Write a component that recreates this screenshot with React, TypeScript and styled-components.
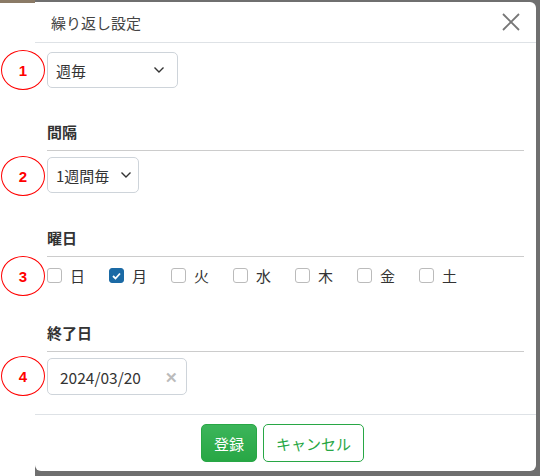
import styled, { createGlobalStyle } from 'styled-components';

const Global = createGlobalStyle`
  body {
    margin: 0;
    font-family: 'Noto Sans CJK JP', 'Noto Sans', sans-serif;
    background: #fff;
  }
`;

const Page = styled.div`
  position: relative;
  width: 540px;
  height: 476px;
  display: flex;
  overflow: hidden;
`;

const Gutter = styled.div`
  width: 35px;
  background: #fff;
  border-top: 3px solid #8a7a66;
  box-sizing: border-box;
`;

const Backdrop = styled.div`
  flex: 1;
  background: #6f6f6f;
  padding: 2px 4px 5px 0;
  display: flex;
`;

const Modal = styled.div`
  flex: 1;
  background: #fff;
  border-radius: 0 6px 6px 6px;
  display: flex;
  flex-direction: column;
`;

const Header = styled.div`
  height: 40px;
  display: flex;
  align-items: center;
  justify-content: space-between;
  padding: 0 16px;
  border-bottom: 1px solid #dee2e6;
  color: #444;
  font-size: 15px;
`;

const Body = styled.div`
  flex: 1;
  padding: 9px 12px 0 12px;
  display: flex;
  flex-direction: column;
`;

const SectionTitle = styled.div<{ $mt: number }>`
  font-size: 15px;
  font-weight: 700;
  color: #333;
  margin-top: ${(p) => p.$mt}px;
  padding-bottom: 8px;
  border-bottom: 1px solid #ccc;
  margin-bottom: 6px;
`;

const Select = styled.div<{ $w: number; $gap: number }>`
  width: ${(p) => p.$w}px;
  height: 36px;
  box-sizing: border-box;
  border: 1px solid #ced4da;
  border-radius: 5px;
  display: flex;
  align-items: center;
  justify-content: space-between;
  padding: 0 ${(p) => p.$gap}px 0 8px;
  font-size: 15px;
  color: #333;
`;

const Days = styled.div`
  display: flex;
  gap: 16px;
  margin-top: 2px;
`;

const Day = styled.label`
  display: flex;
  align-items: center;
  gap: 8px;
  font-size: 15px;
  color: #333;
  width: 46px;
`;

const Box = styled.span<{ $on?: boolean }>`
  width: 15px;
  height: 15px;
  box-sizing: border-box;
  border-radius: 3px;
  border: 1px solid ${(p) => (p.$on ? '#1b6aa5' : '#bbb')};
  background: ${(p) => (p.$on ? '#1b6aa5' : '#fff')};
  display: flex;
  align-items: center;
  justify-content: center;
`;

const DateInput = styled.div`
  width: 140px;
  height: 37px;
  box-sizing: border-box;
  border: 1px solid #ced4da;
  border-radius: 5px;
  display: flex;
  align-items: center;
  justify-content: space-between;
  padding: 0 8px 0 12px;
  font-size: 15.5px;
  color: #333;
`;

const Clear = styled.span`
  color: #bbb;
  font-weight: 700;
  font-size: 15px;
`;

const Footer = styled.div`
  height: 56px;
  border-top: 1px solid #dee2e6;
  display: flex;
  align-items: center;
  justify-content: center;
  gap: 6px;
  margin-top: 18px;
  padding-right: 6px;
`;

const Button = styled.button<{ $primary?: boolean }>`
  height: 38px;
  padding: 0 12px;
  border-radius: 5px;
  font-family: inherit;
  font-size: 15px;
  border: 1px solid #28a745;
  color: ${(p) => (p.$primary ? '#fff' : '#28a745')};
  background: ${(p) => (p.$primary ? 'linear-gradient(#3cb55a, #28a745)' : '#fff')};
`;

const Marker = styled.div<{ $top: number }>`
  position: absolute;
  left: 1px;
  top: ${(p) => p.$top}px;
  width: 44px;
  height: 40px;
  box-sizing: border-box;
  border: 1.5px solid #f00;
  border-radius: 50%;
  display: flex;
  align-items: center;
  justify-content: center;
  color: #f00;
  font-weight: 700;
  font-size: 15px;
  font-family: 'Liberation Sans', sans-serif;
  background: #fff;
`;

const Chevron = () => (
  <svg width="12" height="8" viewBox="0 0 12 8">
    <path d="M1.5 1.5 6 6l4.5-4.5" fill="none" stroke="#333" strokeWidth="1.4" />
  </svg>
);

const days = ['日', '月', '火', '水', '木', '金', '土'];

export default function App() {
  return (
    <>
      <Global />
      <Page>
        <Gutter />
        <Backdrop>
          <Modal>
            <Header>
              <span>繰り返し設定</span>
              <svg width="18" height="18" viewBox="0 0 18 18">
                <path d="M1 1l16 16M17 1 1 17" stroke="#777" strokeWidth="1.8" />
              </svg>
            </Header>
            <Body>
              <Select $w={131} $gap={12}>
                週毎 <Chevron />
              </Select>
              <SectionTitle $mt={33}>間隔</SectionTitle>
              <Select $w={92} $gap={6}>
                1週間毎 <Chevron />
              </Select>
              <SectionTitle $mt={34}>曜日</SectionTitle>
              <Days>
                {days.map((d) => (
                  <Day key={d}>
                    <Box $on={d === '月'}>
                      {d === '月' && (
                        <svg width="9" height="8" viewBox="0 0 9 8">
                          <path d="M1 4l2.5 2.5L8 1.5" fill="none" stroke="#fff" strokeWidth="1.8" />
                        </svg>
                      )}
                    </Box>
                    {d}
                  </Day>
                ))}
              </Days>
              <SectionTitle $mt={36}>終了日</SectionTitle>
              <DateInput>
                2024/03/20 <Clear>✕</Clear>
              </DateInput>
            </Body>
            <Footer>
              <Button $primary>登録</Button>
              <Button>キャンセル</Button>
            </Footer>
          </Modal>
        </Backdrop>
        <Marker $top={50}>1</Marker>
        <Marker $top={156}>2</Marker>
        <Marker $top={256}>3</Marker>
        <Marker $top={356}>4</Marker>
      </Page>
    </>
  );
}
